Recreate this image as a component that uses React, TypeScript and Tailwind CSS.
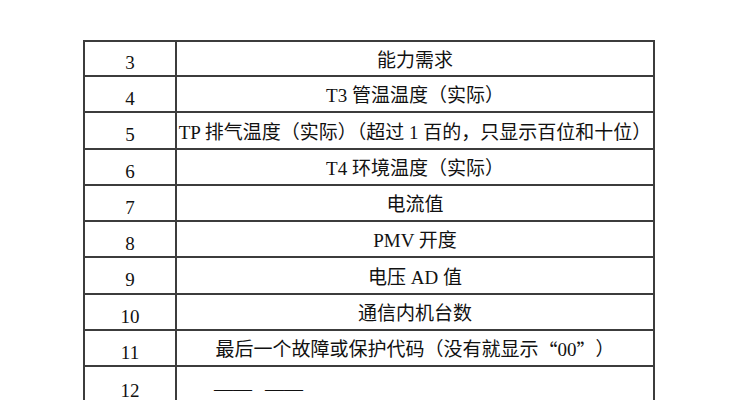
import React from "react";

const rows: { n: string; t: React.ReactNode; h: string; left?: boolean }[] = [
  { n: "3", t: "能力需求", h: "h-[35px]" },
  { n: "4", t: "T3 管温温度（实际）", h: "h-[36px]" },
  { n: "5", t: "TP 排气温度（实际）（超过 1 百的，只显示百位和十位）", h: "h-[37px]" },
  { n: "6", t: "T4 环境温度（实际）", h: "h-[36px]" },
  { n: "7", t: "电流值", h: "h-[36px]" },
  { n: "8", t: "PMV 开度", h: "h-[36px]" },
  { n: "9", t: "电压 AD 值", h: "h-[37px]" },
  { n: "10", t: "通信内机台数", h: "h-[36px]" },
  {
    n: "11",
    t: (
      <>
        最后一个故障或保护代码（没有就显示
        <span className="font-['Noto_Sans_CJK_SC',sans-serif]">“</span>00
        <span className="font-['Noto_Sans_CJK_SC',sans-serif]">”</span>）
      </>
    ),
    h: "h-[36px]",
  },
  {
    n: "12",
    t: (
      <div className="flex gap-[13px]">
        <span>——</span>
        <span>——</span>
      </div>
    ),
    h: "h-[40px]",
    left: true,
  },
];

export default function App() {
  return (
    <div className="w-[731px] h-[400px] overflow-hidden bg-white pt-[40px] pl-[83px] text-[#111] font-['Liberation_Serif','Noto_Sans_CJK_SC',serif]">
      <div className="w-[572px] border-t-2 border-l-2 border-r-2 border-[#3c3c3c]">
        {rows.map((r) => (
          <div
            key={r.n}
            className={`grid grid-cols-[92px_476px] border-b-2 border-[#3c3c3c] ${r.h}`}
          >
            <div className="border-r-2 border-[#3c3c3c] flex items-center justify-center pt-[8px] text-[19px] leading-none">
              {r.n}
            </div>
            {r.left ? (
              <div className="flex items-center pl-[37px] pt-[4px] text-[19px] leading-none">
                {r.t}
              </div>
            ) : (
              <div className="flex items-center justify-center pt-[3px] text-[19px] leading-none whitespace-nowrap">
                {r.t}
              </div>
            )}
          </div>
        ))}
      </div>
    </div>
  );
}
